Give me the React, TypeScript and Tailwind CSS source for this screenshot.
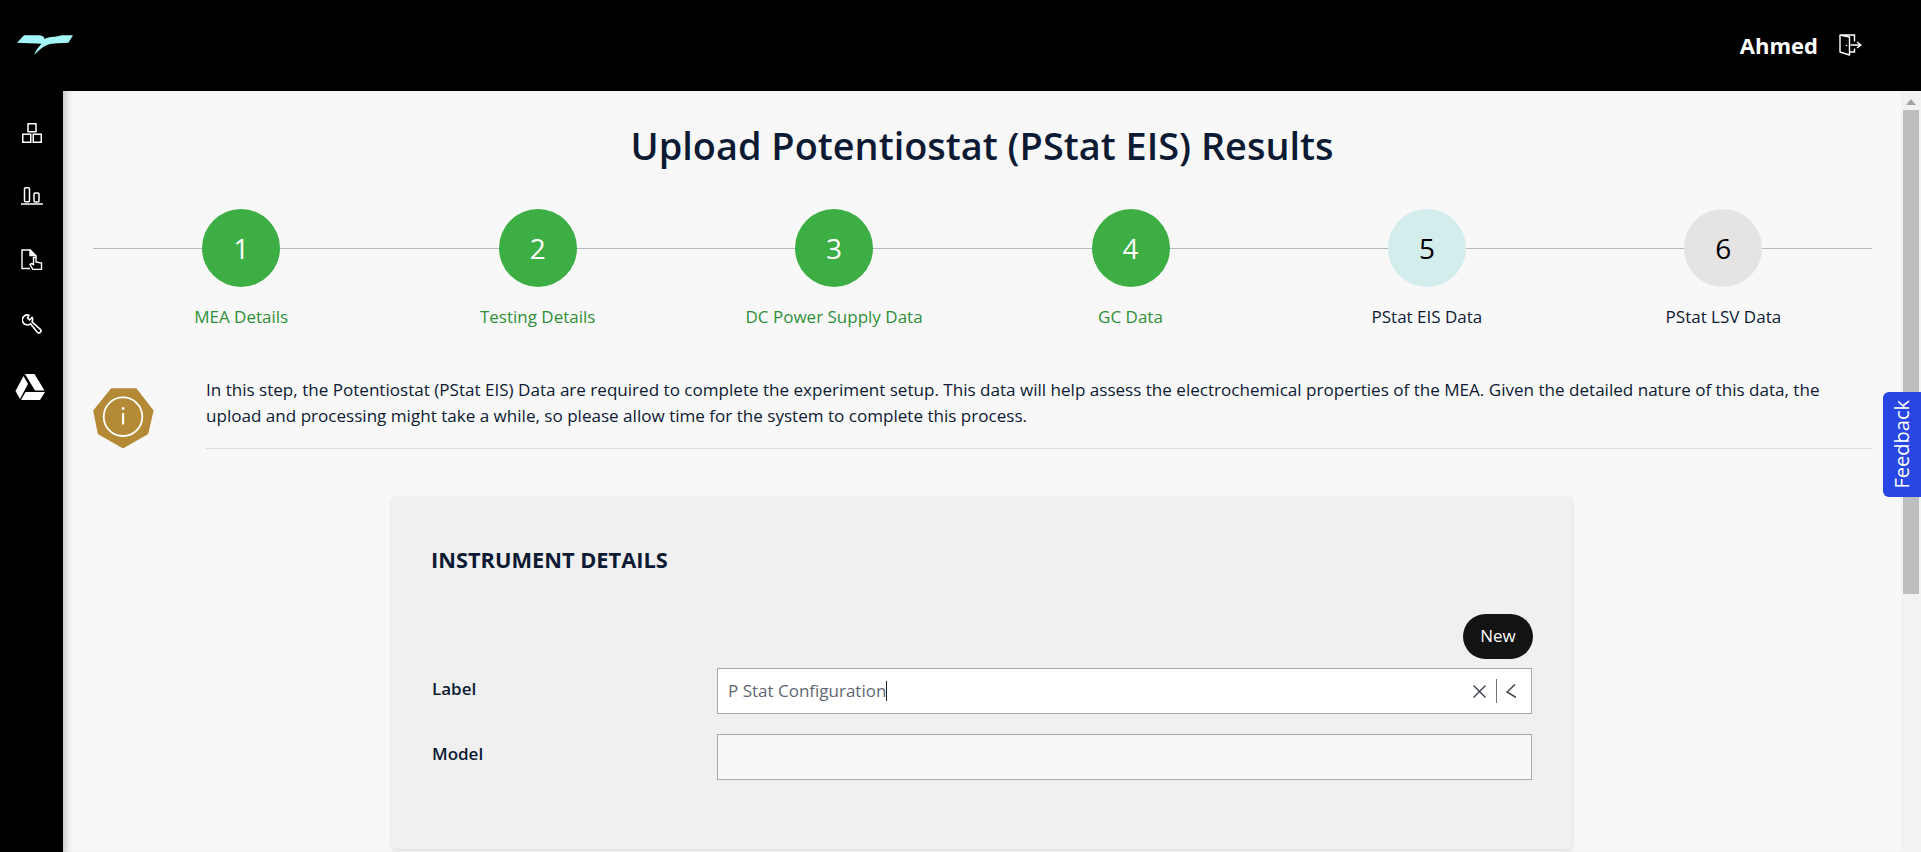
const steps = [
  { n: 1, label: "MEA Details", state: "done" },
  { n: 2, label: "Testing Details", state: "done" },
  { n: 3, label: "DC Power Supply Data", state: "done" },
  { n: 4, label: "GC Data", state: "done" },
  { n: 5, label: "PStat EIS Data", state: "current" },
  { n: 6, label: "PStat LSV Data", state: "todo" },
];

function Logo() {
  return (
    <svg width="56" height="20" viewBox="0 0 56 20" fill="#a5f7f7">
      <path d="M0 7.700 L7 0.300 H22 C25 0.300 27 1.500 27.500 4 C29 3 33 2 38 1.800 L45 0.300 H56 L51.500 7.700 C45 8 38 8 33 9 C27 10.500 22 15 17 20 C19 15 22 11.500 24.500 8.800 C17 8.400 8 8.200 0 7.700 Z" />
    </svg>
  );
}

function NavIcons() {
  return (
    <div className="flex flex-col items-center gap-[44px] pt-[32px] text-white">
      <svg width="20" height="20" viewBox="0 0 20 20" fill="none" stroke="currentColor" strokeWidth="1.500">
        <rect x="6" y="0.750" width="8" height="8" />
        <rect x="0.750" y="11.250" width="8" height="8" />
        <rect x="11.250" y="11.250" width="8" height="8" />
      </svg>
      <svg width="22" height="18" viewBox="0 0 22 18" fill="none" stroke="currentColor" strokeWidth="1.500">
        <rect x="3.500" y="0.750" width="5" height="14" rx="1" />
        <rect x="13" y="6" width="5" height="9" rx="1" />
        <path d="M0 17 H22" />
      </svg>
      <svg width="22" height="21" viewBox="0 0 22 21" fill="none" stroke="currentColor" strokeWidth="1.400">
        <path d="M9 19.500 H1 V1 H9 L15 7 V8" />
        <path d="M9 1 V6.500 H14.500 Z" fill="currentColor" />
        <path d="M12 20.500 L9 15.500 L10.500 14.500 L12.500 15.500 V8.500 H15 V13 L20.500 14 V20.500 Z" fill="#000" />
      </svg>
      <svg width="20" height="20" viewBox="0 0 20 20" fill="none" stroke="currentColor" strokeWidth="1.600" strokeLinejoin="round">
        <path d="M7 1.200 A5 5 0 1 0 8.500 9.800 L15.300 18.300 A1.900 1.900 0 0 0 18.300 15.300 L10 7.800 A5 5 0 0 0 10.200 3.400 L7.500 6 L5.500 4 Z" />
      </svg>
      <svg width="30" height="26" viewBox="0 0 30 26" fill="currentColor" className="-mt-[4px] -ml-[3px]">
        <path d="M10 0 H19.500 L29.500 16.500 H20 Z" />
        <path d="M8.500 2 L13 10 L5 25 L0.500 17 Z" />
        <path d="M10.500 18 H30 L25 26 H6 Z" />
      </svg>
    </div>
  );
}

function ExitIcon() {
  return (
    <svg width="23" height="22" viewBox="0 0 23 22" fill="none" stroke="currentColor" strokeWidth="1.400" className="text-white">
      <path d="M11 1 H1 V18 L10.500 21 V3 L1 1" strokeLinejoin="round" />
      <path d="M11 18 H15.500 V14.500 M15.500 7.500 V1 H11" />
      <path d="M11.500 11 H21.500 M18 8 L21.800 11 L18 14" />
      <circle cx="7.500" cy="11.500" r="0.800" fill="currentColor" stroke="none" />
    </svg>
  );
}

function InfoBadge() {
  return (
    <svg width="61" height="61" viewBox="0 0 61 61" className="mt-[11px] shrink-0">
      <path
        d="M18.500 1 H43 L59.800 22.800 L54.500 45.500 L30 59.500 L5.500 45.500 L1 22.800 Z"
        fill="#b58a37"
        stroke="#b58a37"
        strokeWidth="1.500"
        strokeLinejoin="round"
      />
      <circle cx="30" cy="28.700" r="19.300" fill="none" stroke="#fff" strokeWidth="1.800" />
      <rect x="29" y="25" width="2.200" height="11.500" rx="0.500" fill="#fff" />
      <circle cx="30.100" cy="20.500" r="1.400" fill="#fff" />
    </svg>
  );
}

export default function App() {
  return (
    <div className="flex h-[852px] flex-col overflow-hidden bg-black font-['Open_Sans',sans-serif] text-[#0c1a33]">
      <header className="flex h-[91px] shrink-0 items-center justify-between pr-[59px] pb-[1px] pl-[17px]">
        <Logo />
        <div className="flex items-center gap-[21px]">
          <span className="text-[22px] font-bold text-white">Ahmed</span>
          <ExitIcon />
        </div>
      </header>

      <div className="relative flex min-h-0 flex-1">
        <aside className="w-[63px] shrink-0">
          <NavIcons />
        </aside>

        <main className="min-w-0 flex-1 overflow-hidden bg-[#f8f8f8] px-[30px] shadow-[inset_8px_0_8px_-6px_rgba(0,0,0,0.25)]">
          <h1 className="mt-[29px] text-center text-[37.9px] leading-[50px] font-semibold">
            Upload Potentiostat (PStat EIS) Results
          </h1>

          <div className="relative mt-[39px] -mr-[0.6px] grid grid-cols-6">
            <div className="absolute top-[39px] right-0 left-0 h-px bg-[#b9b9bd]" />
            {steps.map((step) => (
              <div key={step.n} className="relative flex flex-col items-center">
                <div
                  className={
                    step.state === "done"
                      ? "flex size-[78px] items-center justify-center rounded-full bg-[#3cae43] text-[28px] text-white"
                      : step.state === "current"
                        ? "flex size-[78px] items-center justify-center rounded-full bg-[#d3ecec] text-[28px] text-black"
                        : "flex size-[78px] items-center justify-center rounded-full bg-[#e6e3e3] text-[28px] text-black"
                  }
                >
                  {step.n}
                </div>
                <div
                  className={
                    step.state === "done"
                      ? "mt-[19px] text-[17px] leading-[22px] text-[#2f8f38]"
                      : "mt-[19px] text-[17px] leading-[22px] text-[#0c1a33]"
                  }
                >
                  {step.label}
                </div>
              </div>
            ))}
          </div>

          <div className="mt-[49px] -mr-px flex items-start gap-[52px]">
            <InfoBadge />
            <p className="flex-1 border-b border-[#dedede] pb-[19px] text-[17.07px] leading-[26px]">
              In this step, the Potentiostat (PStat EIS) Data are required to complete the experiment setup. This data
              will help assess the electrochemical properties of the MEA. Given the detailed nature of this data, the
              upload and processing might take a while, so please allow time for the system to complete this process.
            </p>
          </div>

          <section className="mt-[48px] ml-[299px] h-[352px] w-[1180px] rounded-[4px] bg-[#f0f0f0] px-[40px] pt-[48px] shadow-[0_1px_4px_rgba(0,0,0,0.12)]">
            <h2 className="-ml-px text-[21.8px] leading-[30px] font-bold text-[#0c1a33]">INSTRUMENT DETAILS</h2>
            <div className="mt-[39px] -mr-px flex justify-end">
              <button type="button" className="h-[45px] w-[70px] rounded-full bg-[#121313] pb-[2px] text-[17px] text-white">
                New
              </button>
            </div>
            <div className="mt-[9px] grid grid-cols-[285px_1fr] gap-y-[20px]">
              <label className="pt-[10px] text-[17px] leading-[22px] font-semibold">Label</label>
              <div className="flex h-[46px] items-center border border-[#a9a9a9] bg-white pr-[15px] pl-[10px]">
                <span className="text-[17px] text-[#5f6775]">P Stat Configuration</span>
                <span className="h-[20px] w-px bg-[#222]" />
                <svg width="13" height="13" viewBox="0 0 13 13" fill="none" stroke="#333a4a" strokeWidth="1.300" className="ml-auto">
                  <path d="M0.500 0.500 L12.500 12.500 M12.500 0.500 L0.500 12.500" />
                </svg>
                <span className="mr-[9px] ml-[10px] h-[24px] w-px bg-[#70757f]" />
                <svg width="10" height="14" viewBox="0 0 10 14" fill="none" stroke="#444" strokeWidth="1.500">
                  <path d="M9 0.500 L1 8 L10 13.500" />
                </svg>
              </div>
              <label className="pt-[9px] text-[17px] leading-[22px] font-semibold">Model</label>
              <div className="h-[46px] border border-[#a9a9a9] bg-[#f8f8f8]" />
            </div>
          </section>
        </main>

        <div className="flex w-[20px] shrink-0 flex-col items-center bg-[#f2f2f2]">
          <div className="mt-[8px] size-0 border-x-[5px] border-b-[6px] border-x-transparent border-b-[#a3a3a3]" />
          <div className="mt-[5px] h-[484px] w-[16px] bg-[#bebebe]" />
        </div>

        <button
          type="button"
          className="absolute top-[301px] right-0 flex h-[105px] w-[38px] items-center justify-center rounded-l-[6px] bg-[#2746e4] text-[20px] text-white"
        >
          <span className="rotate-180 [writing-mode:vertical-rl]">Feedback</span>
        </button>
      </div>
    </div>
  );
}
